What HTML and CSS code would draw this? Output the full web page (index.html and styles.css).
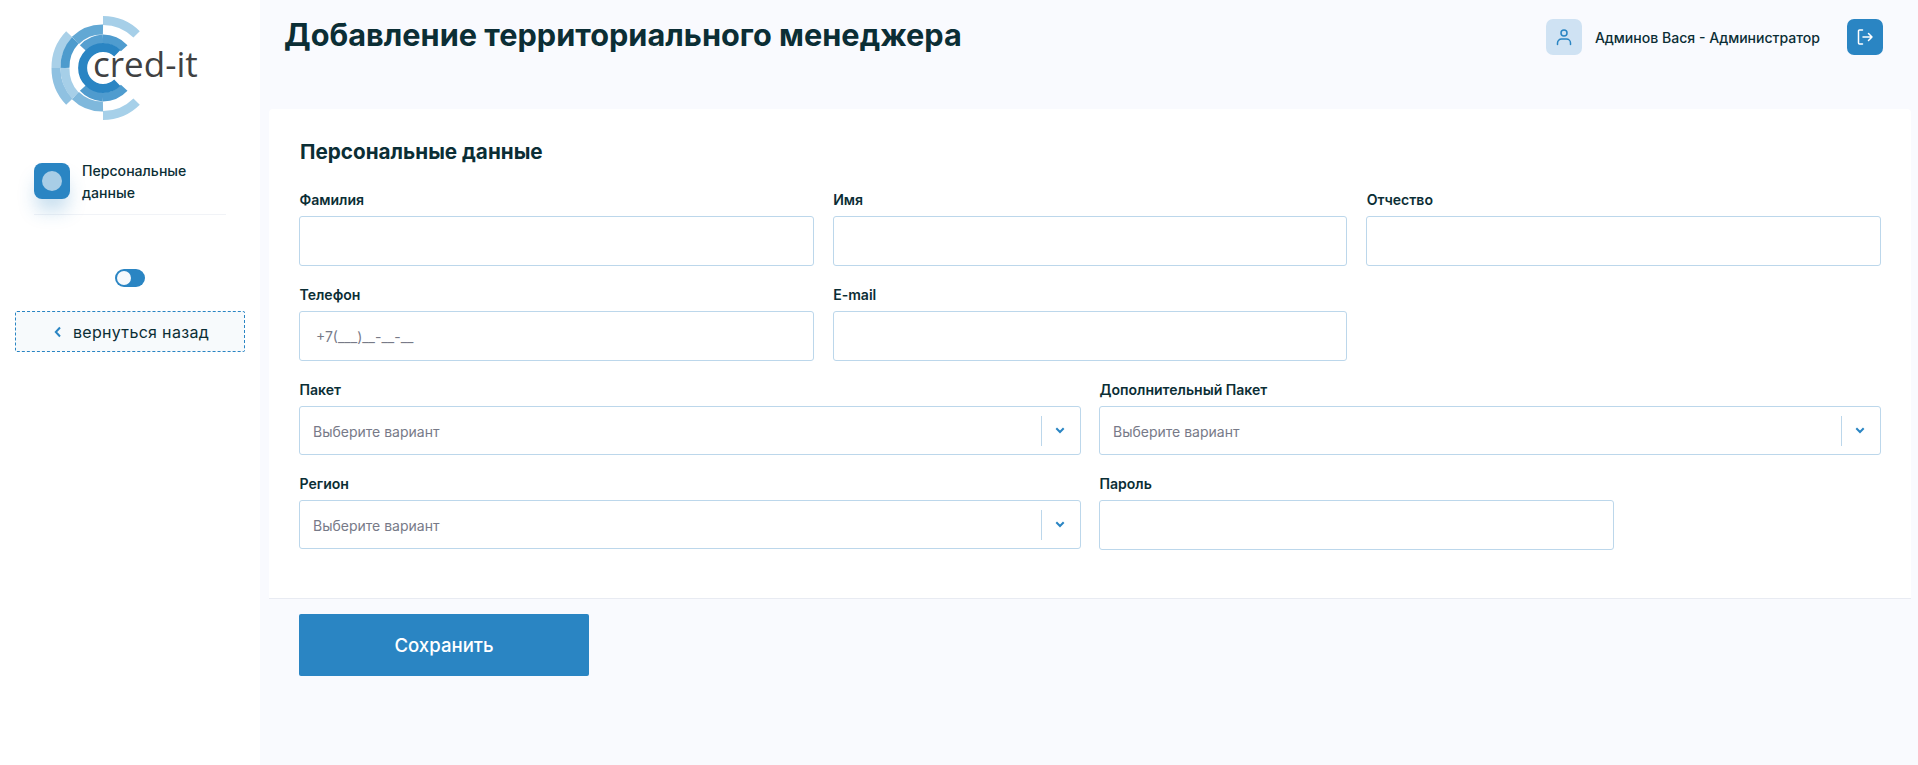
FILE: index.html
```html
<!DOCTYPE html>
<html lang="ru">
<head>
<meta charset="utf-8">
<title>Добавление территориального менеджера</title>
<link rel="stylesheet" href="styles.css">
</head>
<body>
<div class="app">
  <aside class="sidebar">
    <div class="logo">
      <svg width="260" height="130" viewBox="0 0 260 130" class="logo-svg">
        <g fill="none">
          <path d="M103 20.5A47.5 47.5 0 0 1 136.600 34.400" stroke="#a6cfe8" stroke-width="9"/>
          <path d="M103 115.500A47.500 47.500 0 0 0 136.600 101.600" stroke="#a6d0e9" stroke-width="9"/>
          <path d="M69.400 34.400A47.500 47.500 0 0 0 56 68" stroke="#a9d0e8" stroke-width="9"/>
          <path d="M56 68A47.500 47.500 0 0 0 69.400 101.600" stroke="#8fc1e1" stroke-width="9"/>
          <path d="M75.400 40.400A38.500 38.500 0 0 0 65 68" stroke="#4d9bcd" stroke-width="9"/>
          <path d="M65 68A38.500 38.500 0 0 0 75.400 95.600" stroke="#a6cfe8" stroke-width="9"/>
          <path d="M75.400 40.400A38.500 38.500 0 0 1 103 29.500" stroke="#62a8d4" stroke-width="10"/>
          <path d="M75.400 95.600A38.500 38.500 0 0 0 103 106.500" stroke="#7fb8dc" stroke-width="10"/>
          <path d="M83.200 48.200A29 29 0 0 1 103 39" stroke="#559fd0" stroke-width="9"/>
          <path d="M83.200 87.800A29 29 0 0 0 103 97" stroke="#4f9bce" stroke-width="9"/>
          <path d="M103 39A29 29 0 0 1 124.200 48.200" stroke="#4f9ccf" stroke-width="9"/>
          <path d="M103 97A29 29 0 0 0 124.200 87.800" stroke="#4f9ccf" stroke-width="9"/>
          <path d="M117.300 53.200A20.500 20.500 0 1 0 117.300 82.800" stroke="#2a85c3" stroke-width="9"/>
        </g>
        <text x="93" y="77" class="logo-text">cred-it</text>
      </svg>
    </div>
    <nav class="steps">
      <div class="step">
        <span class="step-icon"><span class="step-dot"></span></span>
        <span class="step-name">Персональные<br>данные</span>
      </div>
    </nav>
    <div class="toggle-row"><span class="toggle"><span class="knob"></span></span></div>
    <a class="back" href="#">
      <svg width="8" height="12" viewBox="0 0 8 12" class="back-chev"><path d="M6 1.500 1.800 6 6 10.500" fill="none" stroke="#2a85c3" stroke-width="2"/></svg>
      <span>вернуться назад</span>
    </a>
  </aside>
  <main class="main">
    <header class="topbar">
      <h1 class="title">Добавление территориального менеджера</h1>
      <div class="user">
        <span class="tile tile-light">
          <svg width="18" height="18" viewBox="0 0 18 18" fill="none" stroke="#2a85c3" stroke-width="1.500"><circle cx="9" cy="5" r="3"/><path d="M2.500 16.500V15A4 4 0 0 1 6.500 11h5a4 4 0 0 1 4 4v1.500" stroke-linecap="round"/></svg>
        </span>
        <span class="user-name">Админов Вася - Администратор</span>
        <span class="tile tile-dark">
          <svg width="18" height="18" viewBox="0 0 18 18" fill="none" stroke="#fff" stroke-width="1.500" stroke-linecap="round" stroke-linejoin="round"><path d="M6.500 2H3.500a1 1 0 0 0-1 1v12a1 1 0 0 0 1 1h3"/><path d="M7 9h9M12.500 5.500 16 9l-3.500 3.500"/></svg>
        </span>
      </div>
    </header>
    <section class="card">
      <h2 class="card-title">Персональные данные</h2>
      <div class="row row-3">
        <label class="field"><span class="label">Фамилия</span><input class="input" type="text"></label>
        <label class="field"><span class="label">Имя</span><input class="input" type="text"></label>
        <label class="field"><span class="label">Отчество</span><input class="input" type="text"></label>
      </div>
      <div class="row row-3">
        <label class="field"><span class="label">Телефон</span><input class="input" type="text" value="+7(___)__-__-__"></label>
        <label class="field"><span class="label">E-mail</span><input class="input" type="text"></label>
      </div>
      <div class="row row-2">
        <div class="field"><span class="label">Пакет</span>
          <div class="select"><span class="select-text">Выберите вариант</span><span class="select-sep"></span><svg class="select-chev" width="10" height="7" viewBox="0 0 10 7"><path d="M1.300 1.300 5 5l3.700-3.700" fill="none" stroke="#2a85c3" stroke-width="2"/></svg></div>
        </div>
        <div class="field"><span class="label">Дополнительный Пакет</span>
          <div class="select"><span class="select-text">Выберите вариант</span><span class="select-sep"></span><svg class="select-chev" width="10" height="7" viewBox="0 0 10 7"><path d="M1.300 1.300 5 5l3.700-3.700" fill="none" stroke="#2a85c3" stroke-width="2"/></svg></div>
        </div>
      </div>
      <div class="row row-2 row-last">
        <div class="field"><span class="label">Регион</span>
          <div class="select"><span class="select-text">Выберите вариант</span><span class="select-sep"></span><svg class="select-chev" width="10" height="7" viewBox="0 0 10 7"><path d="M1.300 1.300 5 5l3.700-3.700" fill="none" stroke="#2a85c3" stroke-width="2"/></svg></div>
        </div>
        <label class="field"><span class="label">Пароль</span><input class="input input-short" type="password"></label>
      </div>
    </section>
    <div class="actions"><button class="save" type="button">Сохранить</button></div>
  </main>
</div>
</body>
</html>
```
FILE: styles.css
```css
* { box-sizing: border-box; }
html, body { height: 100%; }
body {
  margin: 0;
  background: #f9fafe;
  font-family: Inter, "Noto Sans", sans-serif;
  color: #0b2e35;
  overflow: hidden;
}
.app { display: flex; height: 100vh; }

.sidebar {
  width: 260px;
  flex: none;
  background: #fff;
  display: flex;
  flex-direction: column;
}
.logo { height: 130px; }
.logo-svg { display: block; }
.logo-text {
  font-family: "Open Sans", sans-serif;
  font-size: 35px;
  font-weight: 500;
  fill: #404142;
  letter-spacing: 0;
}
.steps { padding: 33px 34px 0; }
.step {
  display: flex;
  gap: 12px;
  height: 52px;
  border-bottom: 1px solid #f1f3f7;
}
.step-icon {
  width: 36px;
  height: 36px;
  flex: none;
  border-radius: 8px;
  background: #2a85c3;
  display: flex;
  align-items: center;
  justify-content: center;
  box-shadow: 0 14px 18px -2px rgba(42, 133, 195, 0.26);
}
.step-dot { width: 20px; height: 20px; border-radius: 50%; background: #a8cde6; }
.step-name { font-size: 14.1px; line-height: 21.5px; font-weight: 500; margin-top: -3px; }
.toggle-row { display: flex; justify-content: center; padding-top: 54px; }
.toggle {
  width: 30px;
  height: 18px;
  border-radius: 9px;
  background: #2a85c3;
  display: flex;
  align-items: center;
  padding-left: 2px;
}
.knob { width: 14px; height: 14px; border-radius: 50%; background: #f6f9fc; }
.back {
  margin: 24px 15px 0;
  height: 41px;
  padding-left: 3px;
  border: 1px dashed #2a85c3;
  background: #f7fafc;
  border-radius: 2px;
  display: flex;
  align-items: center;
  justify-content: center;
  gap: 11px;
  font-size: 16px;
  font-weight: 400;
  letter-spacing: 0.32px;
  color: #0b2e35;
  text-decoration: none;
}

.main { flex: 1; min-width: 0; padding: 0 7px 0 9px; }
.topbar {
  height: 109px;
  padding: 17px 28px 0 15px;
  display: flex;
  justify-content: space-between;
  align-items: flex-start;
}
.title { margin: 0; font-size: 30.7px; line-height: 36px; font-weight: 700; }
.user { display: flex; align-items: center; margin-top: 2px; }
.tile {
  width: 36px;
  height: 36px;
  border-radius: 7px;
  display: flex;
  align-items: center;
  justify-content: center;
}
.tile-light { background: #cfe2f3; }
.tile-dark { background: #2a85c3; margin-left: 27px; }
.user-name { margin-left: 13px; font-size: 14.05px; font-weight: 500; }

.card {
  background: #fff;
  border-bottom: 1px solid #e8ebf2;
  border-radius: 4px 4px 0 0;
  height: 490px;
  padding: 28px 30px 0;
}
.card-title { margin: 0 0 23px 1px; font-size: 20.7px; line-height: 30px; font-weight: 700; }
.row { display: grid; gap: 19px; margin-bottom: 19px; }
.row-3 { grid-template-columns: repeat(3, 1fr); }
.row-2 { grid-template-columns: repeat(2, 1fr); gap: 18px; margin-bottom: 19px; }
.field { display: block; min-width: 0; }
.label { display: block; font-size: 14.05px; line-height: 20px; font-weight: 600; margin: 0 0 6px 0.5px; }
.input {
  display: block;
  width: 100%;
  height: 50px;
  border: 1px solid #bcd7eb;
  border-radius: 3px;
  background: #fff;
  padding: 0 16px;
  font: 400 14px Inter, sans-serif;
  color: #777a88;
  outline: 0;
}
.input-short { width: 515px; }
.select {
  height: 49px;
  border: 1px solid #bcd7eb;
  border-radius: 3px;
  display: flex;
  align-items: center;
  padding-left: 13px;
}
.select-text { flex: 1; font-size: 14px; color: #777a88; padding-top: 2px; }
.select-sep { width: 1px; height: 30px; background: #bcd7eb; }
.select-chev { margin: 0 15px 0 13px; }

.actions { padding: 15px 30px 0; }
.save {
  width: 290px;
  height: 62px;
  padding-bottom: 2px;
  border: 0;
  border-radius: 2px;
  background: #2a85c3;
  color: #fff;
  font: 500 18.6px Inter, sans-serif;
}
```
